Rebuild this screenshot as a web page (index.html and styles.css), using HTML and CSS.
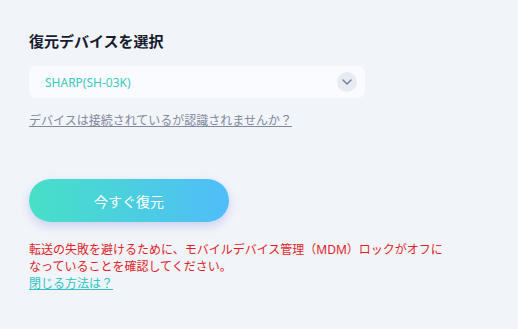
FILE: index.html
```html
<html><head><meta charset="utf-8">
<title>復元デバイスを選択</title>
<link rel="stylesheet" href="styles.css">
</head><body>
<div class="panel">
  <h2 class="title">復元デバイスを選択</h2>

  <div class="device-select">
    <span class="device-name">SHARP(SH-03K)</span>
    <span class="arrow">
      <svg width="10" height="6" viewBox="0 0 10 6"><path d="M1 1 L5 5 L9 1" fill="none" stroke="#7a8499" stroke-width="1.6" stroke-linecap="round" stroke-linejoin="round"/></svg>
    </span>
  </div>

  <a class="help-link" href="#">デバイスは接続されているが認識されませんか？</a>

  <button class="restore-btn">今すぐ復元</button>

  <p class="warning">転送の失敗を避けるために、モバイルデバイス管理（MDM）ロックがオフになっていることを確認してください。</p>
  <a class="close-link" href="#">閉じる方法は？</a>
</div>
</body></html>
```

FILE: styles.css
```css
body {
  margin: 0;
  background-color: #f1f4f9;
  font-family: "Noto Sans", "Noto Sans CJK JP", sans-serif;
}
.panel {
  padding: 29px 29px 0 29px;
  display: flex;
  flex-direction: column;
  align-items: flex-start;
}
.title {
  margin: 0;
  font-size: 15px;
  font-weight: bold;
  color: #161b2e;
  line-height: 24px;
}
.device-select {
  margin-top: 13px;
  width: 336px;
  height: 32px;
  box-sizing: border-box;
  background-color: #f9fbfe;
  border-radius: 7px;
  display: flex;
  align-items: center;
  justify-content: space-between;
  padding: 0 8px 0 16px;
}
.device-name {
  font-size: 12px;
  color: #3cc9c0;
}
.arrow {
  width: 20px;
  height: 20px;
  border-radius: 50%;
  background-color: #e7ebf4;
  display: flex;
  align-items: center;
  justify-content: center;
}
.help-link {
  margin-top: 14px;
  font-size: 12px;
  line-height: 18px;
  color: #7f889c;
  text-decoration: underline;
}
.restore-btn {
  margin-top: 49px;
  width: 200px;
  height: 43px;
  border: none;
  border-radius: 22px;
  background: linear-gradient(90deg, #47e0c6, #50bdf9);
  box-shadow: 0 4px 10px rgba(120, 130, 220, 0.3);
  color: #fff;
  font-family: "Noto Sans CJK JP", sans-serif;
  font-size: 14px;
  cursor: pointer;
}
.warning {
  margin: 19px 0 0 0;
  max-width: 420px;
  font-size: 12px;
  line-height: 17px;
  color: #e01e28;
}
.close-link {
  font-size: 12px;
  line-height: 17px;
  color: #2fc3c4;
  text-decoration: underline;
}
```
